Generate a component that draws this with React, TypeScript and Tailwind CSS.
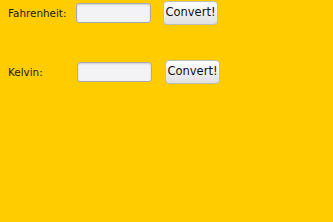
export default function App() {
    const rows = [
        { label: 'Fahrenheit:', labelW: 'w-[68px]', btnMl: 'ml-[12px]' },
        { label: 'Kelvin:', labelW: 'w-[69px]', btnMl: 'ml-[13px]' },
    ];

    return (
        <div className="w-[333px] h-[222px] bg-[#ffcc00] pt-px pl-[8px] flex flex-col gap-[35px] font-['DejaVu_Sans',sans-serif] text-[10.4px] text-[#1a1a1a]">
            {rows.map((row) => (
                <div key={row.label} className="flex items-center h-[24px]">
                    <span className={`${row.labelW} leading-none`}>{row.label}</span>
                    <input
                        type="text"
                        className="w-[75px] h-[20px] rounded-[3px] border border-[#a9a9ad] bg-[#f3f3f6] shadow-[inset_0_1px_2px_rgba(0,0,0,0.15)] outline-none"
                    />
                    <button
                        className={`${row.btnMl} w-[55px] h-[24px] rounded-[4px] border border-[#bdbdbd] bg-gradient-to-b from-white to-[#e0e0e0] text-[11.5px] text-[#111] leading-none`}
                    >
                        Convert!
                    </button>
                </div>
            ))}
        </div>
    );
}
